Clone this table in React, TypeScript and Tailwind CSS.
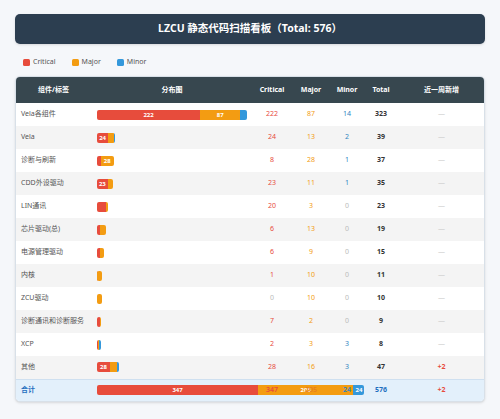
import React from 'react';

type Row = {
  name: string;
  critical: number;
  major: number;
  minor: number;
  recent: string;
};

const rows: Row[] = [
  { name: 'Vela各组件', critical: 222, major: 87, minor: 14, recent: '' },
  { name: 'Vela', critical: 24, major: 13, minor: 2, recent: '' },
  { name: '诊断与刷新', critical: 8, major: 28, minor: 1, recent: '' },
  { name: 'CDD外设驱动', critical: 23, major: 11, minor: 1, recent: '' },
  { name: 'LIN通讯', critical: 20, major: 3, minor: 0, recent: '' },
  { name: '芯片驱动(总)', critical: 6, major: 13, minor: 0, recent: '' },
  { name: '电源管理驱动', critical: 6, major: 9, minor: 0, recent: '' },
  { name: '内核', critical: 1, major: 10, minor: 0, recent: '' },
  { name: 'ZCU驱动', critical: 0, major: 10, minor: 0, recent: '' },
  { name: '诊断通讯和诊断服务', critical: 7, major: 2, minor: 0, recent: '' },
  { name: 'XCP', critical: 2, major: 3, minor: 3, recent: '' },
  { name: '其他', critical: 28, major: 16, minor: 3, recent: '+2' },
];

const totalRow: Row = { name: '合计', critical: 347, major: 205, minor: 24, recent: '+2' };

// max of the component rows; the total row is scaled the same way and overflows
const maxTotal = Math.max(...rows.map((r) => r.critical + r.major + r.minor));

function Bar({ row }: { row: Row }) {
  const total = row.critical + row.major + row.minor;
  const segs = [
    { v: row.critical, cls: 'bg-[#e74c3c]' },
    { v: row.major, cls: 'bg-[#f39c12]' },
    { v: row.minor, cls: 'bg-[#3498db]' },
  ];
  return (
    <div
      className="flex h-[10px] rounded-[2px] overflow-hidden"
      style={{ width: `${(total / maxTotal) * 100}%` }}
    >
      {segs.map((s, i) =>
        s.v > 0 ? (
          <div
            key={i}
            className={`${s.cls} flex items-center justify-center text-[6px] font-bold text-white leading-none`}
            style={{ width: `${(s.v / total) * 100}%` }}
          >
            {s.v > 20 ? s.v : ''}
          </div>
        ) : null
      )}
    </div>
  );
}

function num(v: number, color: string) {
  return v === 0 ? 'text-[#bbbbbb]' : color;
}

export default function App() {
  return (
    <div className="min-h-screen bg-[#f5f7fa] px-[15px] pt-[14px] pb-[16px] font-['Noto_Sans','Noto_Sans_CJK_SC',sans-serif]">
      <div className="h-[30px] rounded-[5px] bg-[#2c3e50] flex items-center justify-center text-white font-bold text-[10.5px] shadow-sm">
        LZCU 静态代码扫描看板（Total: 576）
      </div>

      <div className="mt-[10px] mb-[6px] h-[16px] flex items-center gap-[16px] pl-[8px] text-[7px] text-[#555]">
        <div className="flex items-center gap-[3px]">
          <span className="w-[7px] h-[7px] rounded-[1.5px] bg-[#e74c3c]" />
          Critical
        </div>
        <div className="flex items-center gap-[3px]">
          <span className="w-[7px] h-[7px] rounded-[1.5px] bg-[#f39c12]" />
          Major
        </div>
        <div className="flex items-center gap-[3px]">
          <span className="w-[7px] h-[7px] rounded-[1.5px] bg-[#3498db]" />
          Minor
        </div>
      </div>

      <div className="rounded-[5px] overflow-hidden border border-[#d8e0e8] shadow-sm bg-white">
        <table className="w-full table-fixed border-collapse text-[7px]">
          <colgroup>
            <col className="w-[75px]" />
            <col className="w-[162px]" />
            <col className="w-[38px]" />
            <col className="w-[40px]" />
            <col className="w-[32px]" />
            <col className="w-[36px]" />
            <col />
          </colgroup>
          <thead>
            <tr className="h-[26px] bg-[#37474f] text-white font-bold">
              <th className="font-bold">组件/标签</th>
              <th className="font-bold">分布图</th>
              <th className="font-bold">Critical</th>
              <th className="font-bold">Major</th>
              <th className="font-bold">Minor</th>
              <th className="font-bold">Total</th>
              <th className="font-bold">近一周新增</th>
            </tr>
          </thead>
          <tbody>
            {rows.map((r, i) => (
              <tr key={r.name} className={`h-[23px] ${i % 2 === 1 ? 'bg-[#f4f4f4]' : 'bg-white'}`}>
                <td className="pl-[5px] text-left text-[#555] whitespace-nowrap">{r.name}</td>
                <td className="px-[6px]">
                  <Bar row={r} />
                </td>
                <td className={`text-center ${num(r.critical, 'text-[#e74c3c]')}`}>{r.critical}</td>
                <td className={`text-center ${num(r.major, 'text-[#f39c12]')}`}>{r.major}</td>
                <td className={`text-center ${num(r.minor, 'text-[#2e86c1]')}`}>{r.minor}</td>
                <td className="text-center font-bold text-[#333]">{r.critical + r.major + r.minor}</td>
                <td className="text-center">
                  {r.recent ? (
                    <span className="font-bold text-[#e74c3c]">{r.recent}</span>
                  ) : (
                    <span className="text-[#cccccc]">—</span>
                  )}
                </td>
              </tr>
            ))}
            <tr className="h-[22px] bg-[#e3f0fb] border-t border-[#cfe0f0]">
              <td className="pl-[5px] text-left font-bold text-[#1f6fbf]">{totalRow.name}</td>
              <td className="px-[6px]">
                <Bar row={totalRow} />
              </td>
              <td className="text-center font-semibold text-[#e74c3c]">{totalRow.critical}</td>
              <td className="text-center font-semibold text-[#e67e22]">{totalRow.major}</td>
              <td className="text-center font-semibold text-[#2e86c1]">{totalRow.minor}</td>
              <td className="text-center font-bold text-[#1f6fbf]">576</td>
              <td className="text-center font-bold text-[#e74c3c]">{totalRow.recent}</td>
            </tr>
          </tbody>
        </table>
      </div>
    </div>
  );
}
